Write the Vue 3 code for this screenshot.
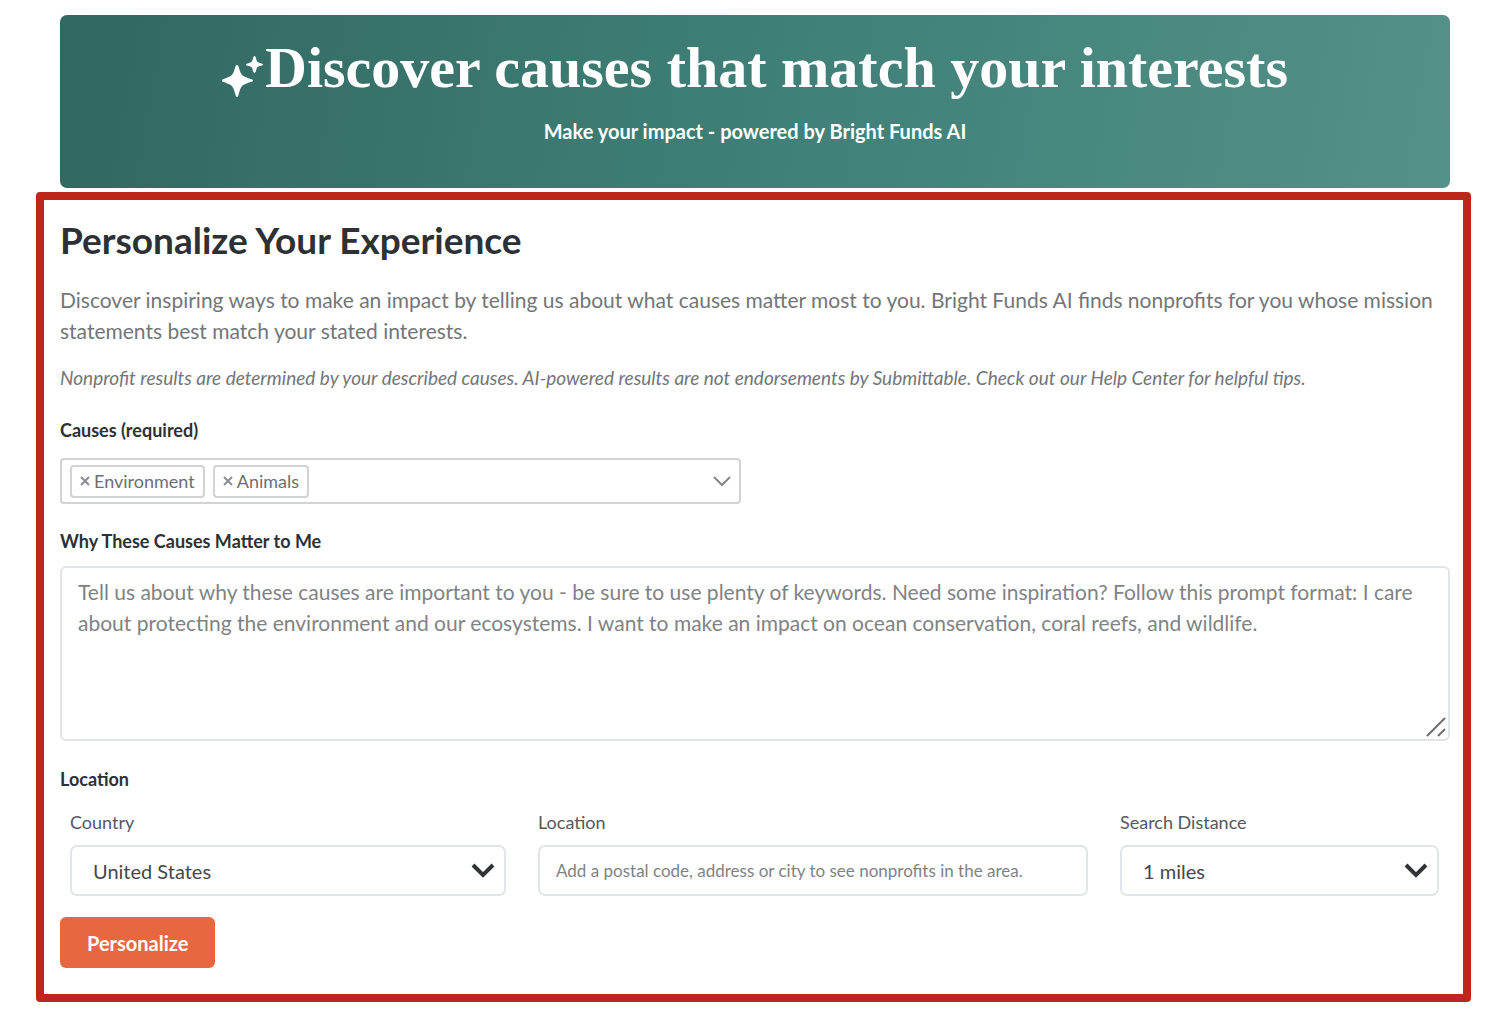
<script setup>
import { ref } from 'vue'

const causes = ref(['Environment', 'Animals'])
const causeQuery = ref('')
const reason = ref('')
const country = ref('United States')
const place = ref('')
const distance = ref('1 miles')

function removeCause(name) {
  causes.value = causes.value.filter((cause) => cause !== name)
}
</script>

<template>
  <main class="page">
    <header class="banner">
      <h1 class="banner-title">
        <svg class="sparkles" viewBox="0 -10 43 60" aria-hidden="true">
          <path d="M15 17 C16 17 16.500 18 17 20 C19 27 20 28 27 30.500 C29 31 31 31.500 31 32.500 C31 33.500 29 34 27 34.500 C20 37 19 38 17 45 C16.500 47 16 49 15 49 C14 49 13.500 47 13 45 C11 38 10 37 3 34.500 C1 34 0 33.500 0 32.500 C0 31.500 1 31 3 30.500 C10 28 11 27 13 20 C13.500 18 14 17 15 17Z" />
          <path d="M32.500 8 C33.500 8 34 10 34.500 12 C35 14 36 14.500 38 15 C40 15.500 41 16 41 16.500 C41 17.500 40 17.500 38 18 C36 18.500 35 19 34.500 21 C34 23 33.500 25 32.500 25 C31.500 25 31 23 30.500 21 C30 19 29 18.500 27 18 C25 17.500 24 17.500 24 16.500 C24 16 25 15.500 27 15 C29 14.500 30 14 30.500 12 C31 10 31.500 8 32.500 8Z" />
        </svg>
        <span>Discover causes that match your interests</span>
      </h1>
      <p class="banner-sub">Make your impact - powered by Bright Funds AI</p>
    </header>

    <form class="panel" @submit.prevent>
      <h2 class="title">Personalize Your Experience</h2>
      <p class="intro">
        Discover inspiring ways to make an impact by telling us about what causes matter most to you. Bright Funds AI finds nonprofits for you whose mission statements best match your stated interests.
      </p>
      <p class="note">
        Nonprofit results are determined by your described causes. AI-powered results are not endorsements by Submittable. Check out our Help Center for helpful tips.
      </p>

      <label class="label" for="causes">Causes (required)</label>
      <div class="multi">
        <span v-for="cause in causes" :key="cause" class="tag">
          <button type="button" class="tag-remove" :aria-label="'Remove ' + cause" @click="removeCause(cause)">
            <svg viewBox="0 0 10 10" aria-hidden="true"><path d="M1 1 L9 9 M9 1 L1 9" /></svg>
          </button>
          <span>{{ cause }}</span>
        </span>
        <input id="causes" v-model="causeQuery" class="multi-input" type="text" role="combobox" aria-expanded="false" />
        <svg class="multi-chevron" viewBox="0 0 18 11" aria-hidden="true"><path d="M1 1 L9 9 L17 1" /></svg>
      </div>

      <label class="label" for="reason">Why These Causes Matter to Me</label>
      <div class="area-wrap">
        <textarea
          id="reason"
          v-model="reason"
          class="area"
          placeholder="Tell us about why these causes are important to you - be sure to use plenty of keywords. Need some inspiration? Follow this prompt format: I care about protecting the environment and our ecosystems. I want to make an impact on ocean conservation, coral reefs, and wildlife."
        ></textarea>
        <svg class="grip" viewBox="0 0 20 20" aria-hidden="true"><path d="M1 19 L19 1 M12 19 L19 12" /></svg>
      </div>

      <fieldset class="location">
        <legend class="label">Location</legend>
        <div class="fields">
          <div class="field">
            <label for="country">Country</label>
            <div class="select-wrap">
              <select id="country" v-model="country" class="control">
                <option>United States</option>
              </select>
              <svg class="chevron" viewBox="0 0 24 16" aria-hidden="true"><path d="M2 2 L12 12 L22 2" /></svg>
            </div>
          </div>
          <div class="field">
            <label for="place">Location</label>
            <input id="place" v-model="place" class="control place" type="text" placeholder="Add a postal code, address or city to see nonprofits in the area." />
          </div>
          <div class="field">
            <label for="distance">Search Distance</label>
            <div class="select-wrap">
              <select id="distance" v-model="distance" class="control">
                <option>1 miles</option>
              </select>
              <svg class="chevron" viewBox="0 0 24 16" aria-hidden="true"><path d="M2 2 L12 12 L22 2" /></svg>
            </div>
          </div>
        </div>
      </fieldset>

      <button type="submit" class="submit">Personalize</button>
    </form>
  </main>
</template>

<style>
body {
  margin: 0;
  background: #fff;
}
</style>

<style scoped>
* {
  box-sizing: border-box;
}

.page {
  padding: 15px 31px 20px 36px;
  font-family: Lato, "Liberation Sans", sans-serif;
  color: #2d3135;
}

.banner {
  display: flex;
  flex-direction: column;
  align-items: center;
  margin: 0 21px 4px 24px;
  padding: 21px 24px 40px;
  border-radius: 7px;
  background: linear-gradient(100deg, #316860 0%, #3f7f77 50%, #549188 100%);
  color: #fff;
}

.banner-title {
  display: flex;
  align-items: center;
  margin: 0 0 15px;
  font: bold 58px/64px "Liberation Serif", serif;
}

.sparkles {
  width: 43px;
  height: 60px;
  fill: #fff;
}

.banner-sub {
  margin: 0;
  font-size: 20px;
  font-weight: 700;
  line-height: 33px;
}

.panel {
  padding: 18px 13px 26px 16px;
  border: 8px solid #bb271a;
  border-radius: 4px;
}

.title {
  margin: 0 0 22px;
  font-size: 37px;
  font-weight: 700;
  line-height: 44px;
}

.intro,
.note {
  margin: 0 0 16px;
  font-size: 21px;
  line-height: 31px;
  color: #737678;
}

.note {
  margin-bottom: 25px;
  font-size: 19px;
  font-style: italic;
}

.label {
  display: block;
  padding: 0;
  font-size: 18px;
  font-weight: 700;
  line-height: 24px;
}

.multi {
  display: flex;
  align-items: center;
  gap: 8px;
  width: 49%;
  height: 46px;
  margin: 16px 0 25px;
  padding: 0 8px;
  border: 2px solid #d2d3d4;
  border-radius: 4px;
}

.tag {
  display: flex;
  align-items: center;
  gap: 4px;
  height: 33px;
  padding: 0 8px;
  border: 2px solid #d2d3d4;
  border-radius: 4px;
  font-size: 18px;
  color: #6c6f72;
}

.tag-remove {
  display: flex;
  padding: 0;
  border: 0;
  background: none;
}

.tag-remove svg {
  width: 10px;
  height: 10px;
  stroke: #8b8e90;
  stroke-width: 2;
}

.multi-input {
  flex: 1;
  min-width: 0;
  border: 0;
  outline: 0;
  background: none;
  font: inherit;
}

.multi-chevron {
  width: 18px;
  height: 11px;
  fill: none;
  stroke: #85888b;
  stroke-width: 2;
}

.area-wrap {
  position: relative;
  margin: 13px 0 26px;
}

.area {
  display: block;
  width: 100%;
  height: 175px;
  padding: 8px 16px;
  border: 2px solid #e1e5e9;
  border-radius: 6px;
  background: #fff;
  font: 21px/31px Lato, "Liberation Sans", sans-serif;
  color: #44484c;
  resize: none;
}

.area::placeholder,
.place::placeholder {
  color: #808385;
  opacity: 1;
}

.grip {
  position: absolute;
  right: 4px;
  bottom: 4px;
  width: 20px;
  height: 20px;
  stroke: #6f6f6f;
  stroke-width: 2;
}

.location {
  min-width: 0;
  margin: 0 0 21px;
  padding: 0;
  border: 0;
}

.fields {
  display: grid;
  grid-template-columns: 436fr 550fr 319fr;
  gap: 32px;
  padding: 19px 11px 0 10px;
}

.field {
  display: flex;
  flex-direction: column;
  gap: 11px;
  min-width: 0;
  font-size: 18px;
  line-height: 24px;
  color: #56595c;
}

.select-wrap {
  position: relative;
}

.control {
  display: block;
  width: 100%;
  height: 51px;
  padding: 0 21px;
  border: 2px solid #e1e5e9;
  border-radius: 7px;
  background: #fff;
  font: 20px Lato, "Liberation Sans", sans-serif;
  color: #44484c;
  appearance: none;
}

.place {
  padding: 0 16px;
  font-size: 17px;
}

.chevron {
  position: absolute;
  top: 18px;
  right: 11px;
  width: 24px;
  height: 16px;
  fill: none;
  stroke: #303437;
  stroke-width: 4;
  pointer-events: none;
}

.submit {
  display: block;
  height: 51px;
  padding: 0 27px;
  border: 0;
  border-radius: 6px;
  background: #e86741;
  font: bold 20px Lato, "Liberation Sans", sans-serif;
  color: #fff;
}
</style>
